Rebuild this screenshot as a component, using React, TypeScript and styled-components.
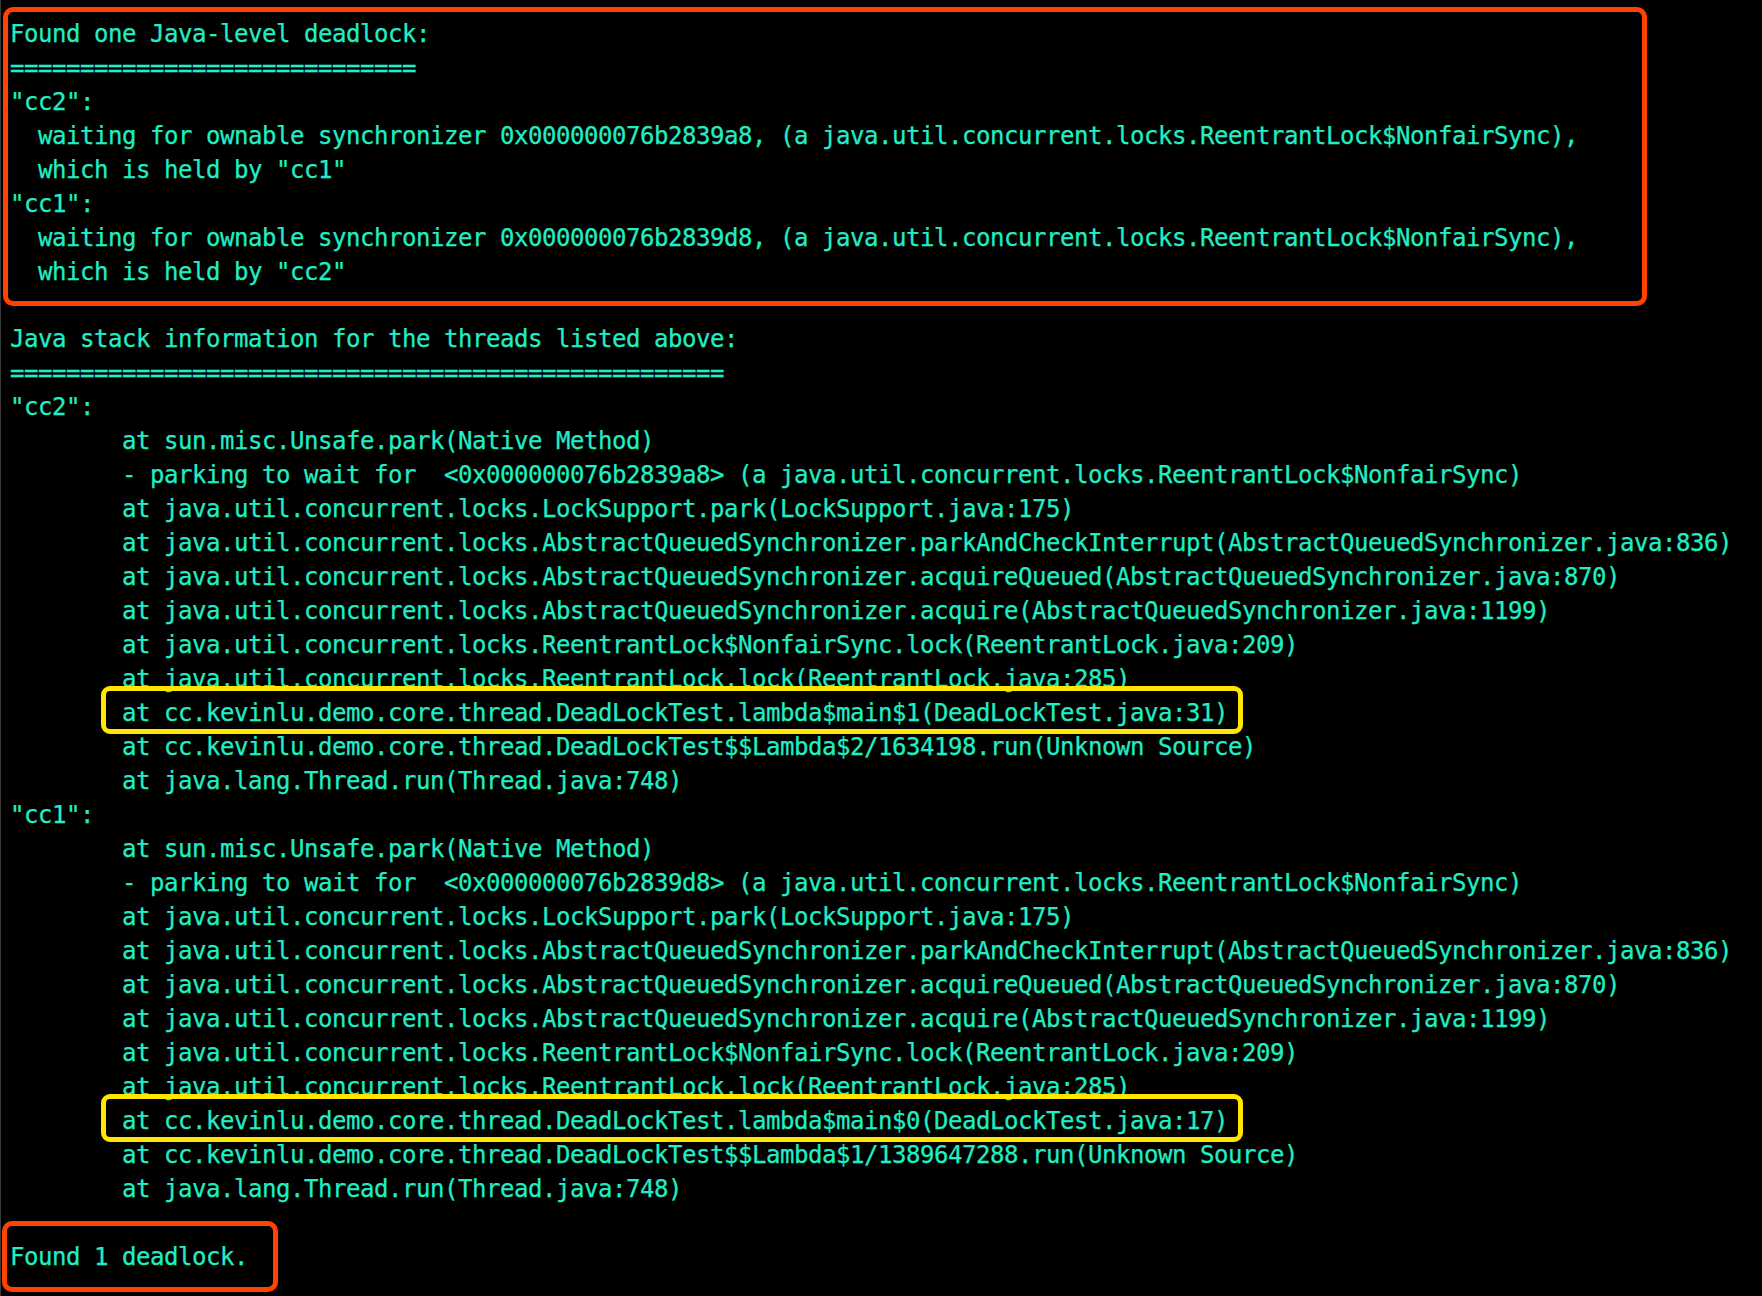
import styled, { createGlobalStyle } from "styled-components";

const GlobalStyle = createGlobalStyle`
  html, body {
    margin: 0;
    padding: 0;
    background: #000;
  }
`;

// one terminal cell is 14px wide
const CELL = 14;

const Screen = styled.div`
  min-height: 1296px;
  box-sizing: border-box;
  padding-top: 7px;
  border-left: 1px solid #3a3a3a;
  background: #000;
  color: #20eec6;
  font-family: "DejaVu Sans Mono", "Liberation Mono", monospace;
  font-size: 24px;
  letter-spacing: -0.45px;
  line-height: 34px;
  -webkit-text-stroke: 0.25px #20eec6;
`;

const Frame = styled.div<{ $width: number; $pad: string; $left: number }>`
  box-sizing: border-box;
  width: ${({ $width }) => $width}px;
  margin-left: ${({ $left }) => $left}px;
  border: 5px solid #ff4203;
  border-radius: 10px;
  padding: ${({ $pad }) => $pad};
`;

const Stack = styled.div`
  margin: 16px 0 15px;
  padding-left: 9px;
`;

const Line = styled.div<{ $indent?: number }>`
  height: 34px;
  white-space: pre;
  padding-left: ${({ $indent = 0 }) => $indent * CELL}px;
`;

const Highlight = styled.span`
  position: relative;
  display: inline-block;

  &::before {
    content: "";
    position: absolute;
    left: -21px;
    right: -15px;
    top: -10px;
    bottom: -4px;
    border: 5.5px solid #ffe500;
    border-radius: 9px;
    pointer-events: none;
  }
`;

type StackLine = { text: string; indent: number; mark?: boolean };

const threadStack = (
  name: string,
  addr: string,
  lambda: string,
  line: number,
  proxy: string
): StackLine[] => [
  { text: `"${name}":`, indent: 0 },
  { text: "at sun.misc.Unsafe.park(Native Method)", indent: 8 },
  {
    text: `- parking to wait for  <${addr}> (a java.util.concurrent.locks.ReentrantLock$NonfairSync)`,
    indent: 8,
  },
  { text: "at java.util.concurrent.locks.LockSupport.park(LockSupport.java:175)", indent: 8 },
  {
    text: "at java.util.concurrent.locks.AbstractQueuedSynchronizer.parkAndCheckInterrupt(AbstractQueuedSynchronizer.java:836)",
    indent: 8,
  },
  {
    text: "at java.util.concurrent.locks.AbstractQueuedSynchronizer.acquireQueued(AbstractQueuedSynchronizer.java:870)",
    indent: 8,
  },
  {
    text: "at java.util.concurrent.locks.AbstractQueuedSynchronizer.acquire(AbstractQueuedSynchronizer.java:1199)",
    indent: 8,
  },
  {
    text: "at java.util.concurrent.locks.ReentrantLock$NonfairSync.lock(ReentrantLock.java:209)",
    indent: 8,
  },
  { text: "at java.util.concurrent.locks.ReentrantLock.lock(ReentrantLock.java:285)", indent: 8 },
  {
    text: `at cc.kevinlu.demo.core.thread.DeadLockTest.${lambda}(DeadLockTest.java:${line})`,
    indent: 8,
    mark: true,
  },
  {
    text: `at cc.kevinlu.demo.core.thread.DeadLockTest$$${proxy}.run(Unknown Source)`,
    indent: 8,
  },
  { text: "at java.lang.Thread.run(Thread.java:748)", indent: 8 },
];

const summary: StackLine[] = [
  { text: "Found one Java-level deadlock:", indent: 0 },
  { text: "=============================", indent: 0 },
  { text: '"cc2":', indent: 0 },
  {
    text: "waiting for ownable synchronizer 0x000000076b2839a8, (a java.util.concurrent.locks.ReentrantLock$NonfairSync),",
    indent: 2,
  },
  { text: 'which is held by "cc1"', indent: 2 },
  { text: '"cc1":', indent: 0 },
  {
    text: "waiting for ownable synchronizer 0x000000076b2839d8, (a java.util.concurrent.locks.ReentrantLock$NonfairSync),",
    indent: 2,
  },
  { text: 'which is held by "cc2"', indent: 2 },
];

const stacks: StackLine[] = [
  { text: "Java stack information for the threads listed above:", indent: 0 },
  { text: "===================================================", indent: 0 },
  ...threadStack("cc2", "0x000000076b2839a8", "lambda$main$1", 31, "Lambda$2/1634198"),
  ...threadStack("cc1", "0x000000076b2839d8", "lambda$main$0", 17, "Lambda$1/1389647288"),
];

const renderLines = (lines: StackLine[]) =>
  lines.map((l, i) => (
    <Line key={i} $indent={l.indent}>
      {l.mark ? <Highlight>{l.text}</Highlight> : l.text}
    </Line>
  ));

const App = () => {
  return (
    <>
      <GlobalStyle />
      <Screen>
        <Frame $width={1644} $left={2} $pad="4.7px 0 12.3px 2px">
          {renderLines(summary)}
        </Frame>
        <Stack>{renderLines(stacks)}</Stack>
        <Frame $width={276} $left={1} $pad="14px 0 13px 3px">
          <Line>Found 1 deadlock.</Line>
        </Frame>
      </Screen>
    </>
  );
};

export default App;
